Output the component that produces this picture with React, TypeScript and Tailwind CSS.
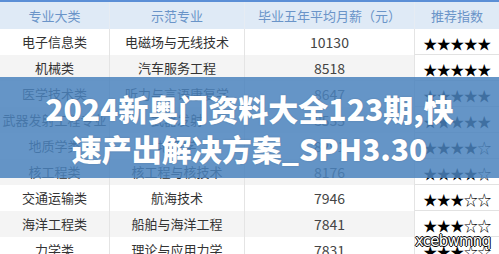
const rows: [string, string, string, number][] = [
  ['电子信息类', '电磁场与无线技术', '10130', 5],
  ['机械类', '汽车服务工程', '8518', 5],
  ['医学技术类', '听力与言语康复学', '8647', 5],
  ['武器发射工程专业', '武器发射', '8535', 5],
  ['地质学类', '地质学', '8291', 4],
  ['核工程类', '核工程与核技术', '8176', 4],
  ['交通运输类', '航海技术', '7946', 3],
  ['海洋工程类', '船舶与海洋工程', '7841', 3],
  ['力学类', '理论与应用力学', '7831', 3],
];

const font = { fontFamily: '"Noto Sans CJK SC", "Noto Sans", sans-serif' };

function Stars({ n }: { n: number }) {
  return (
    <span className="tracking-[-0.5px]">
      {'★'.repeat(n)}
      {'☆'.repeat(5 - n)}
    </span>
  );
}

export default function App() {
  return (
    <div className="relative w-[499px] h-[254px] overflow-hidden bg-white" style={font}>
      <div className="h-[2px] bg-[#5b8fd6]" />
      <div className="grid grid-cols-[110px_135px_170px_84px] h-[27px] bg-[#dfeaf6] text-[13px] text-[#6a94c8]">
        <div className="flex items-center justify-center border-r border-[#e6ecf3]">专业大类</div>
        <div className="flex items-center justify-center border-r border-[#e6ecf3]">示范专业</div>
        <div className="flex items-center justify-center border-r border-[#e6ecf3]">毕业五年平均月薪（元）</div>
        <div className="flex items-center justify-center">推荐指数</div>
      </div>
      {rows.map(([a, b, c, n], i) => (
        <div
          key={a}
          className={`grid grid-cols-[110px_135px_170px_84px] h-[26px] text-[13px] text-[#333] ${
            i % 2 === 0 ? 'bg-white' : 'bg-[#f4f4f4]'
          }`}
        >
          <div className="flex items-center justify-center whitespace-nowrap border-r border-[#e4e4e4]">{a}</div>
          <div className="flex items-center justify-center whitespace-nowrap border-r border-[#e4e4e4]">{b}</div>
          <div className="flex items-center justify-center text-[14px] text-[#444] border-r border-[#e4e4e4]">{c}</div>
          <div className="flex items-center justify-center pt-1 text-[14px] text-black bg-white border-b border-[#e2e2e2]">
            <Stars n={n} />
          </div>
        </div>
      ))}

      <div className="absolute left-0 right-0 top-[77px] h-[101px] bg-[#4a82bd]/85 flex flex-col items-center justify-center">
        <div className="text-white font-black text-[30px] leading-[40px] whitespace-nowrap [text-shadow:0_0_2px_rgba(0,0,0,0.15)]">
          2024新奥门资料大全123期,快
        </div>
        <div className="text-white font-black text-[30px] leading-[40px] whitespace-nowrap [text-shadow:0_0_2px_rgba(0,0,0,0.15)]">
          速产出解决方案_SPH3.30
        </div>
      </div>

      <div
        className="absolute left-[415px] top-[232px] text-[15px] leading-[18px] text-white tracking-[-0.8px] [text-shadow:-1px_0_0_#000,1px_0_0_#000,0_-1px_0_#000,0_1px_0_#000]"
        style={{ fontFamily: '"DejaVu Sans", sans-serif' }}
      >
        xcebwmnq
      </div>
    </div>
  );
}
